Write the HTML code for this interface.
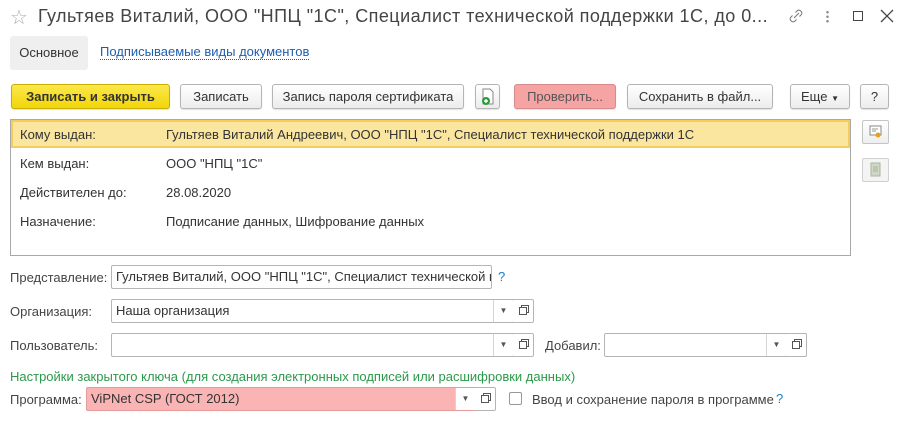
<!DOCTYPE html>
<html><head><meta charset="utf-8"><style>
*{box-sizing:border-box;margin:0;padding:0}
body{width:906px;height:421px;background:#fff;font-family:"Liberation Sans",Arial,sans-serif;font-size:13px;color:#333;position:relative;overflow:hidden}
.a{position:absolute;white-space:nowrap}
.btn{position:absolute;top:84px;height:25px;border:1px solid #b5b5b5;border-radius:3px;background:linear-gradient(#fff,#ececec);text-align:center;line-height:23px;box-shadow:0 1px 1px rgba(0,0,0,.12);color:#333}
.inp{position:absolute;height:24px;border:1px solid #b5b5b5;border-radius:2px;background:#fff;line-height:22px;padding-left:4px;overflow:hidden;white-space:nowrap;color:#333}
.dd{position:absolute;top:0;bottom:0;width:20px;border-left:1px solid #d5d5d5;font-size:8px;text-align:center;line-height:22px;color:#555}
.ob{position:absolute;height:24px;width:21px;border:1px solid #b5b5b5;border-left:none;border-radius:0 2px 2px 0;background:#fff}
.ob:after{content:"";position:absolute;left:6px;top:7px;width:6px;height:6px;border:1px solid #555;box-shadow:2px -2px 0 -1px #fff,2px -2px 0 0 #555}
.lbl{position:absolute;color:#444}
.row{position:absolute;left:20px}
</style></head><body>
<div class="a" style="left:10px;top:5px;font-size:20px;color:#aaa">☆</div>
<div class="a" style="left:38px;top:6px;font-size:18px;color:#444;letter-spacing:0.45px">Гультяев Виталий, ООО "НПЦ "1С", Специалист технической поддержки 1С, до 0...</div>
<svg class="a" style="left:786px;top:6px" width="20" height="20" viewBox="0 0 20 20"><path d="M8 12l5-5M9.5 6.5l2-2a3 3 0 0 1 4 4l-2 2M10.5 13.5l-2 2a3 3 0 0 1-4-4l2-2" stroke="#777" fill="none" stroke-width="1"/></svg>
<div class="a" style="left:826px;top:10px;width:3px;height:14px;background:radial-gradient(circle,#888 1px,transparent 1.5px) 0 0/3px 4.5px"></div>
<div class="a" style="left:853px;top:11px;width:10px;height:10px;border:1.5px solid #444"></div>
<svg class="a" style="left:880px;top:9px" width="14" height="14"><path d="M1 1L13 13M13 1L1 13" stroke="#444" stroke-width="1.3"/></svg>

<div class="a" style="left:10px;top:36px;width:78px;height:34px;background:#efefef;border-radius:3px;line-height:34px;text-align:center;color:#333">Основное</div>
<div class="a" style="left:100px;top:45px;color:#1c5eae;border-bottom:1px dotted #1c5eae;line-height:14px">Подписываемые виды документов</div>

<div class="btn" style="left:11px;width:159px;background:linear-gradient(#fbe84a,#f2d60a);border-color:#c9ad00;font-weight:bold;color:#333">Записать и закрыть</div>
<div class="btn" style="left:180px;width:82px">Записать</div>
<div class="btn" style="left:272px;width:192px">Запись пароля сертификата</div>
<div class="btn" style="left:475px;width:25px"><svg width="16" height="18" viewBox="0 0 16 18" style="margin-top:3px"><path d="M3 1h7l3 3v12H3z" fill="#fff" stroke="#888"/><circle cx="6" cy="13" r="4" fill="#2a9a3a"/><path d="M6 11v4M4 13h4" stroke="#fff" stroke-width="1.4"/></svg></div>
<div class="btn" style="left:514px;width:102px;background:#f5a3a3;border-color:#d98a8a;color:#555">Проверить...</div>
<div class="btn" style="left:627px;width:146px">Сохранить в файл...</div>
<div class="btn" style="left:790px;width:60px">Еще <span style="font-size:8px">▼</span></div>
<div class="btn" style="left:860px;width:29px">?</div>

<div class="a" style="left:10px;top:119px;width:841px;height:137px;border:1px solid #a8a8a8"></div>
<div class="a" style="left:11px;top:120px;width:839px;height:28px;background:#fbe6a0;border:2px solid #f3cd5e"></div>
<div class="row" style="top:127px">Кому выдан:</div><div class="a" style="left:166px;top:127px">Гультяев Виталий Андреевич, ООО "НПЦ "1С", Специалист технической поддержки 1С</div>
<div class="row" style="top:156px">Кем выдан:</div><div class="a" style="left:166px;top:156px">ООО "НПЦ "1С"</div>
<div class="row" style="top:185px">Действителен до:</div><div class="a" style="left:166px;top:185px">28.08.2020</div>
<div class="row" style="top:214px">Назначение:</div><div class="a" style="left:166px;top:214px">Подписание данных, Шифрование данных</div>

<div class="a" style="left:862px;top:120px;width:27px;height:24px;border:1px solid #c5c5c5;border-radius:2px;background:linear-gradient(#fff,#eee)"><svg width="25" height="22"><rect x="7" y="5" width="11" height="9" fill="#fff" stroke="#888"/><path d="M9 8h6M9 10h4" stroke="#999"/><circle cx="15" cy="14" r="2.5" fill="#e8a020"/></svg></div>
<div class="a" style="left:862px;top:158px;width:27px;height:24px;border:1px solid #d0d0d0;border-radius:2px;background:#f4f4f4"><svg width="25" height="22"><rect x="8" y="4" width="9" height="13" fill="#cfd8c4" stroke="#aab59d"/><path d="M10 8h5M10 10h5M10 12h5" stroke="#aab59d"/></svg></div>

<div class="lbl" style="left:10px;top:270px">Представление:</div>
<div class="inp" style="left:111px;top:265px;width:381px">Гультяев Виталий, ООО "НПЦ "1С", Специалист технической г</div>
<div class="a" style="left:498px;top:269px;color:#1c7ec8">?</div>

<div class="lbl" style="left:10px;top:304px">Организация:</div>
<div class="inp" style="left:111px;top:299px;width:403px">Наша организация<div class="dd" style="right:0">▼</div></div>
<div class="ob" style="left:513px;top:299px"></div>

<div class="lbl" style="left:10px;top:338px">Пользователь:</div>
<div class="inp" style="left:111px;top:333px;width:403px"><div class="dd" style="right:0">▼</div></div>
<div class="ob" style="left:513px;top:333px"></div>
<div class="lbl" style="left:545px;top:338px">Добавил:</div>
<div class="inp" style="left:604px;top:333px;width:183px"><div class="dd" style="right:0">▼</div></div>
<div class="ob" style="left:786px;top:333px"></div>

<div class="a" style="left:10px;top:369px;color:#2a9a4a">Настройки закрытого ключа (для создания электронных подписей или расшифровки данных)</div>

<div class="lbl" style="left:10px;top:392px">Программа:</div>
<div class="inp" style="left:86px;top:387px;width:390px;background:linear-gradient(90deg,#fbb4b4 0,#fbb4b4 370px,#fff 370px);border-color:#e29a9a">ViPNet CSP (ГОСТ 2012)<div class="dd" style="right:0;background:#fff">▼</div></div>
<div class="ob" style="left:475px;top:387px"></div>
<div class="a" style="left:509px;top:392px;width:13px;height:13px;border:1px solid #999;border-radius:2px;background:#fff"></div>
<div class="a" style="left:532px;top:392px;color:#444">Ввод и сохранение пароля в программе</div>
<div class="a" style="left:776px;top:391px;color:#1c7ec8">?</div>
</body></html>
